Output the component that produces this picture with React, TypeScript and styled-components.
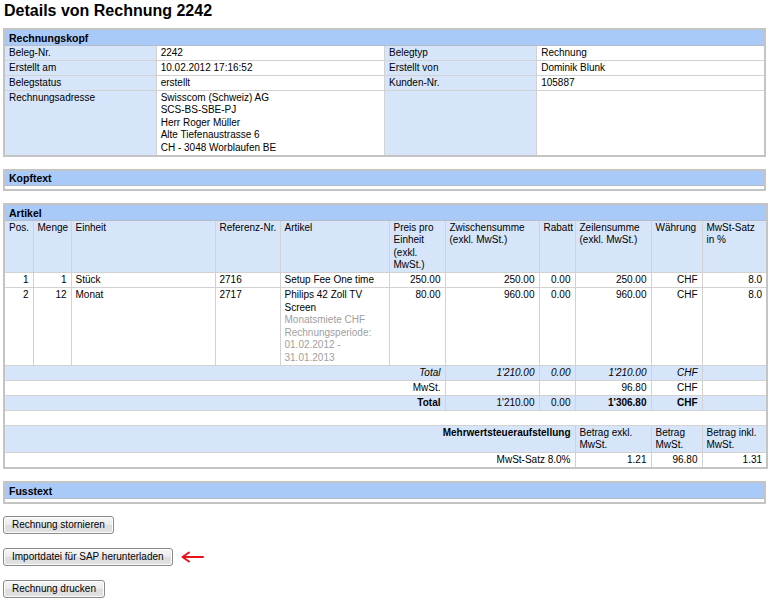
import React from "react";
import styled, { createGlobalStyle } from "styled-components";

const GlobalStyle = createGlobalStyle`
  body {
    margin: 0;
    background: #fff;
    color: #000;
    font-family: "Liberation Sans", Arial, sans-serif;
  }
`;

type Align = "left" | "right" | "center";

const articleCols = [29, 38, 144, 65, 109, 56, 94, 36, 76, 51, 65];

const App: React.FC = () => {
  return (
    <Page>
      <GlobalStyle />
      <Title>Details von Rechnung 2242</Title>

      <Panel>
        <colgroup>
          <col style={{ width: "20%" }} />
          <col style={{ width: "30%" }} />
          <col style={{ width: "20%" }} />
          <col style={{ width: "30%" }} />
        </colgroup>
        <tbody>
          <tr>
            <PanelTitle colSpan={4}>Rechnungskopf</PanelTitle>
          </tr>
          <tr>
            <Cell $label>Beleg-Nr.</Cell>
            <Cell>2242</Cell>
            <Cell $label>Belegtyp</Cell>
            <Cell>Rechnung</Cell>
          </tr>
          <tr>
            <Cell $label>Erstellt am</Cell>
            <Cell>10.02.2012 17:16:52</Cell>
            <Cell $label>Erstellt von</Cell>
            <Cell>Dominik Blunk</Cell>
          </tr>
          <tr>
            <Cell $label>Belegstatus</Cell>
            <Cell>erstellt</Cell>
            <Cell $label>Kunden-Nr.</Cell>
            <Cell>105887</Cell>
          </tr>
          <tr>
            <Cell $label>Rechnungsadresse</Cell>
            <Cell>
              Swisscom (Schweiz) AG
              <br />
              SCS-BS-SBE-PJ
              <br />
              Herr Roger Müller
              <br />
              Alte Tiefenaustrasse 6
              <br />
              CH - 3048 Worblaufen BE
            </Cell>
            <Cell $label />
            <Cell />
          </tr>
        </tbody>
      </Panel>

      <Panel>
        <tbody>
          <tr>
            <PanelTitle>Kopftext</PanelTitle>
          </tr>
          <tr>
            <Spacer />
          </tr>
        </tbody>
      </Panel>

      <Panel>
        <colgroup>
          {articleCols.map((w, i) => (
            <col key={i} style={{ width: w }} />
          ))}
        </colgroup>
        <tbody>
          <tr>
            <PanelTitle colSpan={11}>Artikel</PanelTitle>
          </tr>
          <tr>
            <Cell $label>Pos.</Cell>
            <Cell $label>Menge</Cell>
            <Cell $label>Einheit</Cell>
            <Cell $label $nowrap>
              Referenz-Nr.
            </Cell>
            <Cell $label>Artikel</Cell>
            <Cell $label>
              Preis pro
              <br />
              Einheit
              <br />
              (exkl.
              <br />
              MwSt.)
            </Cell>
            <Cell $label>
              Zwischensumme
              <br />
              (exkl. MwSt.)
            </Cell>
            <Cell $label>Rabatt</Cell>
            <Cell $label>
              Zeilensumme
              <br />
              (exkl. MwSt.)
            </Cell>
            <Cell $label>Währung</Cell>
            <Cell $label>
              MwSt-Satz
              <br />
              in %
            </Cell>
          </tr>
          <tr>
            <Cell $align="right">1</Cell>
            <Cell $align="right">1</Cell>
            <Cell>Stück</Cell>
            <Cell>2716</Cell>
            <Cell $nowrap>Setup Fee One time</Cell>
            <Cell $align="right">250.00</Cell>
            <Cell $align="right">250.00</Cell>
            <Cell $align="right">0.00</Cell>
            <Cell $align="right">250.00</Cell>
            <Cell $align="right">CHF</Cell>
            <Cell $align="right">8.0</Cell>
          </tr>
          <tr>
            <Cell $align="right">2</Cell>
            <Cell $align="right">12</Cell>
            <Cell>Monat</Cell>
            <Cell>2717</Cell>
            <Cell>
              Philips 42 Zoll TV
              <br />
              Screen
              <Note>
                Monatsmiete CHF
                <br />
                Rechnungsperiode:
                <br />
                01.02.2012 -
                <br />
                31.01.2013
              </Note>
            </Cell>
            <Cell $align="right">80.00</Cell>
            <Cell $align="right">960.00</Cell>
            <Cell $align="right">0.00</Cell>
            <Cell $align="right">960.00</Cell>
            <Cell $align="right">CHF</Cell>
            <Cell $align="right">8.0</Cell>
          </tr>
          <tr>
            <Cell $label $italic $align="right" colSpan={6}>
              Total
            </Cell>
            <Cell $label $italic $align="right">1'210.00</Cell>
            <Cell $label $italic $align="right">0.00</Cell>
            <Cell $label $italic $align="right">1'210.00</Cell>
            <Cell $label $italic $align="right">CHF</Cell>
            <Cell $label />
          </tr>
          <tr>
            <Cell $align="right" colSpan={6}>
              MwSt.
            </Cell>
            <Cell />
            <Cell />
            <Cell $align="right">96.80</Cell>
            <Cell $align="right">CHF</Cell>
            <Cell />
          </tr>
          <tr>
            <Cell $label $bold $align="right" colSpan={6}>
              Total
            </Cell>
            <Cell $label $align="right">1'210.00</Cell>
            <Cell $label $align="right">0.00</Cell>
            <Cell $label $bold $align="right">1'306.80</Cell>
            <Cell $label $bold $align="right">CHF</Cell>
            <Cell $label />
          </tr>
          <tr>
            <Cell colSpan={11}>&nbsp;</Cell>
          </tr>
          <tr>
            <Cell $label $bold $align="right" colSpan={8}>
              Mehrwertsteueraufstellung
            </Cell>
            <Cell $label>
              Betrag exkl.
              <br />
              MwSt.
            </Cell>
            <Cell $label>
              Betrag
              <br />
              MwSt.
            </Cell>
            <Cell $label>
              Betrag inkl.
              <br />
              MwSt.
            </Cell>
          </tr>
          <tr>
            <Cell $align="right" colSpan={8}>
              MwSt-Satz 8.0%
            </Cell>
            <Cell $align="right">1.21</Cell>
            <Cell $align="right">96.80</Cell>
            <Cell $align="right">1.31</Cell>
          </tr>
        </tbody>
      </Panel>

      <Panel>
        <tbody>
          <tr>
            <PanelTitle>Fusstext</PanelTitle>
          </tr>
          <tr>
            <Spacer />
          </tr>
        </tbody>
      </Panel>

      <Actions>
        <ActionRow>
          <Button type="button">Rechnung stornieren</Button>
        </ActionRow>
        <ActionRow>
          <Button type="button">Importdatei für SAP herunterladen</Button>
          <svg width="24" height="12" viewBox="0 0 24 12">
            <path
              d="M23 6H3M9 1.5L2.5 6L9 10.5"
              fill="none"
              stroke="#e8121c"
              strokeWidth="2"
              strokeLinecap="round"
              strokeLinejoin="round"
            />
          </svg>
        </ActionRow>
        <ActionRow>
          <Button type="button">Rechnung drucken</Button>
        </ActionRow>
      </Actions>
    </Page>
  );
};

export default App;

// Styled Components
const Page = styled.div`
  padding: 1px 4px 4px 3px;
`;

const Title = styled.h1`
  margin: 0 0 7px 1px;
  font-size: 16px;
  line-height: 20px;
  font-weight: bold;
`;

const Panel = styled.table`
  width: 100%;
  table-layout: fixed;
  border-collapse: collapse;
  border: 2px solid #c4c4c4;
  margin-bottom: 12px;
  font-size: 10px;
  line-height: 12.5px;
`;

const PanelTitle = styled.th`
  background: #a9c9f8;
  text-align: left;
  font-weight: bold;
  font-size: 10.5px;
  padding: 1.5px 4px 0.5px;
  border-bottom: 1px solid #b4bcc8;
`;

const Cell = styled.td<{
  $label?: boolean;
  $align?: Align;
  $italic?: boolean;
  $bold?: boolean;
  $nowrap?: boolean;
}>`
  background: ${(p) => (p.$label ? "#d6e5fa" : "#ffffff")};
  text-align: ${(p) => p.$align ?? "left"};
  font-style: ${(p) => (p.$italic ? "italic" : "normal")};
  font-weight: ${(p) => (p.$bold ? "bold" : "normal")};
  white-space: ${(p) => (p.$nowrap ? "nowrap" : "normal")};
  vertical-align: top;
  padding: 1px 4px 0.5px;
  border: 1px solid #d2d2d2;
  overflow: hidden;
`;

const Note = styled.div`
  color: #a0a0a0;
`;

const Spacer = styled.td`
  height: 3px;
  padding: 0;
  background: #fff;
`;

const Actions = styled.div`
  display: flex;
  flex-direction: column;
  gap: 14px;
`;

const ActionRow = styled.div`
  display: flex;
  align-items: center;
  gap: 7px;
`;

const Button = styled.button`
  height: 18px;
  padding: 0 8px;
  font-family: "Liberation Sans", Arial, sans-serif;
  font-size: 10px;
  color: #000;
  border: 1px solid #8a8a8a;
  border-radius: 3px;
  background: linear-gradient(#f6f6f6, #ebebeb 50%, #dddddd 51%, #e2e2e2);
  box-shadow: inset 0 0 0 1px #fcfcfc;
  cursor: pointer;
`;
